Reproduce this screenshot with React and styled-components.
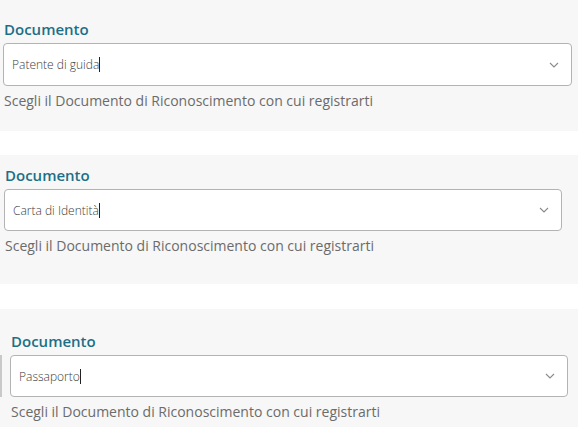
import React from "react";
import styled, { createGlobalStyle } from "styled-components";

const GlobalStyle = createGlobalStyle`
  body {
    margin: 0;
    background: #ffffff;
    font-family: "Open Sans", "Noto Sans", sans-serif;
  }
`;

const Page = styled.div`
  display: flex;
  flex-direction: column;
`;

const Panel = styled.section`
  background: #f7f7f7;
  padding: ${(p) => p.$top}px 0 0 ${(p) => p.$left}px;
  height: ${(p) => p.$height}px;
  margin-top: ${(p) => p.$gap}px;
  box-sizing: border-box;
  display: flex;
  align-items: flex-start;
`;

const Edge = styled.div`
  width: 2px;
  height: 42px;
  margin-top: 24px;
  margin-right: ${(p) => p.$space}px;
  background: #c9c9c9;
`;

const Field = styled.div`
  display: flex;
  flex-direction: column;
  width: ${(p) => p.$width}px;
`;

const Label = styled.label`
  font-size: 15px;
  font-weight: 600;
  color: #1c6f87;
  line-height: 20px;
  padding-left: 1px;
  margin-bottom: 4px;
`;

const Select = styled.div`
  height: ${(p) => p.$height}px;
  box-sizing: border-box;
  border: 1px solid #b3b3b3;
  border-radius: 4px;
  background: #ffffff;
  display: flex;
  align-items: center;
  justify-content: space-between;
  padding: 0 12px 0 8px;
`;

const Value = styled.span`
  font-family: "Open Sans", sans-serif;
  font-size: 12px;
  font-weight: 300;
  color: #3c3c3c;
  display: flex;
  align-items: center;
`;

const Caret = styled.span`
  display: inline-block;
  width: 1px;
  height: 15px;
  background: #222;
`;

const Chevron = styled.svg`
  width: 10px;
  height: 6px;
`;

const Help = styled.p`
  margin: 6px 0 0 1px;
  font-size: 14px;
  color: #6b6b6b;
  line-height: 18px;
`;

const DocField = ({ value, width, height }) => (
  <Field $width={width}>
    <Label>Documento</Label>
    <Select $height={height}>
      <Value>
        {value}
        <Caret />
      </Value>
      <Chevron viewBox="0 0 10 6">
        <path d="M1 1 L5 5 L9 1" fill="none" stroke="#8a8a8a" strokeWidth="1.1" />
      </Chevron>
    </Select>
    <Help>Scegli il Documento di Riconoscimento con cui registrarti</Help>
  </Field>
);

export default function App() {
  return (
    <Page>
      <GlobalStyle />
      <Panel $top={19} $left={3} $height={131} $gap={0}>
        <DocField value="Patente di guida" width={569} height={43} />
      </Panel>
      <Panel $top={10} $left={4} $height={129} $gap={24}>
        <DocField value="Carta di Identità" width={558} height={42} />
      </Panel>
      <Panel $top={22} $left={0} $height={118} $gap={25}>
        <Edge $space={8} />
        <DocField value="Passaporto" width={558} height={42} />
      </Panel>
    </Page>
  );
}
